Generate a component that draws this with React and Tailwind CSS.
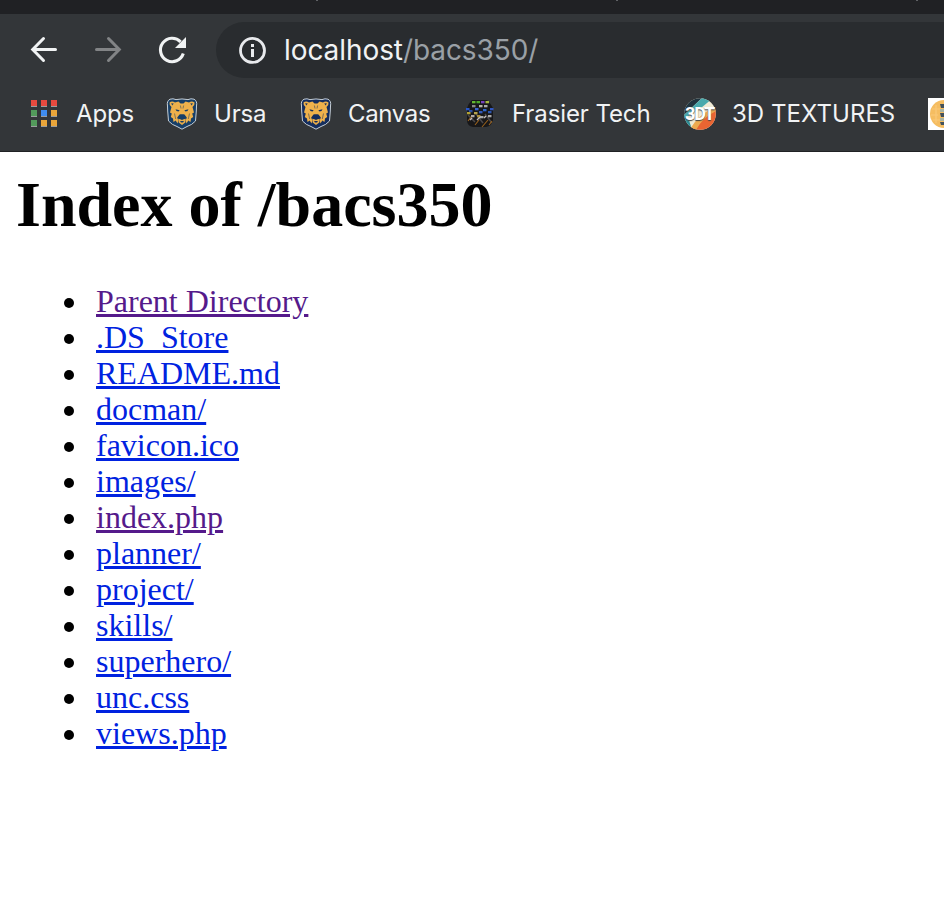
const files = [
  ['Parent Directory', true],
  ['.DS_Store'],
  ['README.md'],
  ['docman/'],
  ['favicon.ico'],
  ['images/'],
  ['index.php', true],
  ['planner/'],
  ['project/'],
  ['skills/'],
  ['superhero/'],
  ['unc.css'],
  ['views.php'],
];

function BackIcon() {
  return (
    <svg className="w-8 h-8 shrink-0" viewBox="0 0 32 32" fill="none" stroke="#f1f3f4" strokeWidth="3" strokeLinecap="round">
      <path d="M27.5 15.5H5M15.5 4.5L4.7 15.5L15.5 26.5" />
    </svg>
  );
}

function ForwardIcon() {
  return (
    <svg className="w-8 h-8 shrink-0" viewBox="0 0 32 32" fill="none" stroke="#828486" strokeWidth="3" strokeLinecap="round">
      <path d="M4.5 15.5H27M16.5 4.5L27.3 15.5L16.5 26.5" />
    </svg>
  );
}

function ReloadIcon() {
  return (
    <svg className="w-8 h-8 shrink-0" viewBox="0 0 32 32" fill="none">
      <path d="M27.3 19.6A11.7 11.7 0 1 1 24.6 7.8" stroke="#f1f3f4" strokeWidth="3.1" />
      <path d="M30 3V14H19Z" fill="#f1f3f4" />
    </svg>
  );
}

function InfoIcon() {
  return (
    <svg className="w-8 h-8 shrink-0" viewBox="0 0 32 32" fill="none">
      <circle cx="16.5" cy="16.4" r="12" stroke="#e8eaed" strokeWidth="2.8" />
      <path d="M15 10h3v3h-3zM15 15h3v8h-3z" fill="#e8eaed" />
    </svg>
  );
}

function AppsIcon() {
  const colors = ['#e84a3f', '#e84a3f', '#e84a3f', '#529a5b', '#3f8cf0', '#e9a53a', '#529a5b', '#e9a53a', '#e9a53a'];
  return (
    <svg className="w-8 h-8 shrink-0" viewBox="0 0 32 32">
      {colors.map((c, i) => {
        const x = 3 + (i % 3) * 10;
        const y = 2 + Math.floor(i / 3) * 10;
        return (
          <g key={i}>
            <rect x={x} y={y} width="6" height="7" fill="#9a9d9f" />
            <rect x={x} y={y} width="6" height="6" fill={c} />
          </g>
        );
      })}
    </svg>
  );
}

function BearIcon({ navy = '#173f68' }) {
  return (
    <svg className="w-8 h-8 shrink-0" viewBox="0 0 32 32">
      <path d="M4 1.2Q7 .2 10 1.6Q16 .3 22 1.6Q25 .2 28 1.2Q31.5 3 30.5 8L30.3 13L29.5 23Q26 27 21 28.5L16 31.2L11 28.5Q6 27 2.5 23L1.7 13L1.5 8Q.5 3 4 1.2Z" fill={navy} stroke="#c5ced6" strokeWidth="1" />
      <path d="M3.5 4.5Q6 2.6 9 4.4L12.5 3.6L14.5 5.6H17.5L19.5 3.6L23 4.4Q26 2.6 28.5 4.5Q29 7 26.5 9L28 14.5L26.2 15.5L27.2 19L25 20.5L24.5 24L22.3 22.5L20.5 25.5L19.7 22.5L20.8 19.5L18.5 16.5H13.5L11.2 19.5L12.3 22.5L11.5 25.5L9.7 22.5L7.5 24L7 20.5L4.8 19L5.8 15.5L4 14.5L5.5 9Q3 7 3.5 4.5Z" fill="#eeb14b" />
      <path d="M5.2 5.2L7.8 5.6L6.2 7.5ZM26.8 5.2L24.2 5.6L25.8 7.5ZM9.5 11.2L13.7 12.3L12.5 13.6L10.5 13ZM22.5 11.2L18.3 12.3L19.5 13.6L21.5 13Z" fill={navy} />
      <path d="M8.5 15.5L9.7 21M23.5 15.5L22.3 21M14.4 7.5L15 10.5M17.6 7.5L17 10.5" stroke={navy} strokeWidth=".8" opacity=".65" />
      <path d="M13 17.5L14.4 16.5H17.6L19 17.5L17.3 20.3H14.7Z" fill={navy} />
      <path d="M12.2 20.8L14.4 21.2L16 22L17.6 21.2L19.8 20.8L19.3 24.5L16 27L12.7 24.5Z" fill="#e8ac49" />
      <path d="M14 23H18L17 24.6H15Z" fill={navy} />
    </svg>
  );
}

function FrasierIcon() {
  const keys = [
    [8, 3, '#63b82d'], [12.5, 3, '#4ba82a'], [17, 3, '#7741bc'], [21.5, 3, '#a5b73e'],
    [2, 10, '#2856c7'], [8, 7, '#888'], [11, 10, '#3964cf'], [15, 7, '#b5b3a9'], [20, 7, '#aaa'], [19, 11, '#2d65ce'], [26, 10, '#3157bf'],
    [5, 12, '#2951a8'], [10, 14, '#b5a24c'], [15, 13, '#3159b9'], [24, 13, '#2b55ad'],
    [3, 14, '#b0a035'], [7, 17, '#b1aaa5'], [13, 17, '#a88c35'], [16, 18, '#aaa'], [24, 17, '#aaa'],
  ];
  return (
    <svg className="w-8 h-8 shrink-0" viewBox="0 0 32 32">
      <path d="M8 2H23Q27 6 29 10V22Q28 28 22 29H9Q3 28 3 22V10Q4 6 8 2Z" fill="#171719" />
      <path d="M4 17L11 24M12 16L19 25M21 16L28 25" stroke="#4a4849" strokeWidth="1.5" />
      {keys.map(([x, y, fill], i) => (
        <rect key={i} x={x} y={y} width="3.5" height="2.3" fill={fill} />
      ))}
      <path d="M4 23L7 19M11 27L15 22M18 29L24 22M25 27L28 23" stroke="#99621e" strokeWidth="1.1" />
      <path d="M6 22L8 20M13 22L16 19M20 20L22 18" stroke="#c5bebb" strokeWidth="1.4" />
    </svg>
  );
}

function TexturesIcon() {
  return (
    <span className="relative block w-8 h-8 shrink-0">
      <svg className="w-8 h-8" viewBox="0 0 32 32">
        <defs>
          <clipPath id="disc"><circle cx="16" cy="16" r="15.8" /></clipPath>
        </defs>
        <g clipPath="url(#disc)">
          <path d="M0 0H32V32H0Z" fill="#f0ead5" />
          <path d="M0 0H18L0 17Z" fill="#20343f" />
          <path d="M18 0H29L17 10L0 21V17Z" fill="#49a9ad" />
          <path d="M0 17L5 22L8 32H0Z" fill="#2c8c95" />
          <path d="M32 8V32H8Q14 18 32 8Z" fill="#e96532" />
          <path d="M32 8Q14 17 6 31L12 32Q18 20 32 13Z" fill="#edaa50" />
        </g>
      </svg>
      <span className="absolute left-[1px] top-[6px] text-[18px] leading-5 font-bold tracking-[-1.2px] text-white [font-family:Roboto,sans-serif] [text-shadow:0_1px_1px_#444]">3DT</span>
    </span>
  );
}

function CookieIcon() {
  return (
    <svg className="w-4 h-8 shrink-0" viewBox="0 0 16 32">
      <path d="M0 0H16V32H0Z" fill="#fff" />
      <circle cx="16" cy="16" r="14" fill="#f5bd61" />
      <path d="M4 11H12M3 17H10M5 22H12M8 7V25" stroke="#fbc978" strokeWidth="1.2" />
      <path d="M12 6H16V10H13ZM12 15H16V19H13ZM12 24H16V27H13Z" fill="#42515b" />
      <path d="M12 11H16V14H12ZM12 20H16V23H12Z" fill="#a9b4a3" />
    </svg>
  );
}

export default function App() {
  return (
    <div className="h-[906px] w-[944px] overflow-hidden bg-white">
      <div className="flex h-[14px] bg-[#202124] pl-[316px] gap-[298px]">
        <span className="h-px w-[2px] bg-[#5f6165]" />
        <span className="h-px w-[2px] bg-[#5f6165]" />
        <span className="h-px w-[2px] bg-[#5f6165]" />
      </div>
      <header className="h-[138px] border-b border-[#202124] bg-[#333639] [font-family:Inter,sans-serif]">
        <div className="flex h-[76px] items-start pt-2 pl-7">
          <div className="flex h-14 w-[188px] items-center gap-8">
            <BackIcon />
            <ForwardIcon />
            <ReloadIcon />
          </div>
          <div className="flex h-14 flex-1 items-center rounded-l-full bg-[#292c2f] pl-5">
            <InfoIcon />
            <span className="ml-4 whitespace-pre text-[28px] leading-8 tracking-[-0.08px] text-[#f1f3f4]">
              localhost<span className="text-[#9aa0a6]">/bacs350/</span>
            </span>
          </div>
        </div>
        <nav className="flex h-12 items-center overflow-hidden whitespace-nowrap pl-7 text-[24px] text-[#f1f3f4]">
          <div className="flex w-[138px] shrink-0 items-center gap-4"><AppsIcon /><span className="tracking-[-0.15px]">Apps</span></div>
          <div className="flex w-[134px] shrink-0 items-center gap-4"><BearIcon /><span className="tracking-[-0.2px]">Ursa</span></div>
          <div className="flex w-[164px] shrink-0 items-center gap-4"><BearIcon navy="#142d5e" /><span className="tracking-[-0.35px]">Canvas</span></div>
          <div className="flex w-[220px] shrink-0 items-center gap-4"><FrasierIcon /><span className="tracking-[-0.1px]">Frasier Tech</span></div>
          <div className="flex w-[244px] shrink-0 items-center gap-4"><TexturesIcon /><span className="tracking-[0.04px]">3D TEXTURES</span></div>
          <CookieIcon />
        </nav>
      </header>
      <main className="px-4 pt-[17px] text-black [font-family:'Liberation_Serif',serif]">
        <h1 className="text-[64px] leading-[72px] font-bold">Index of /bacs350</h1>
        <ul className="mt-[42px] text-[32px] leading-9">
          {files.map(([name, visited]) => (
            <li key={name} className="flex items-center">
              <span className="ml-[48px] mr-[22px] mt-[4px] h-[10px] w-[10px] rounded-full bg-black" />
              <a className={visited ? 'text-[#551a8b] underline' : 'text-[#0022e0] underline'}>{name}</a>
            </li>
          ))}
        </ul>
      </main>
    </div>
  );
}
